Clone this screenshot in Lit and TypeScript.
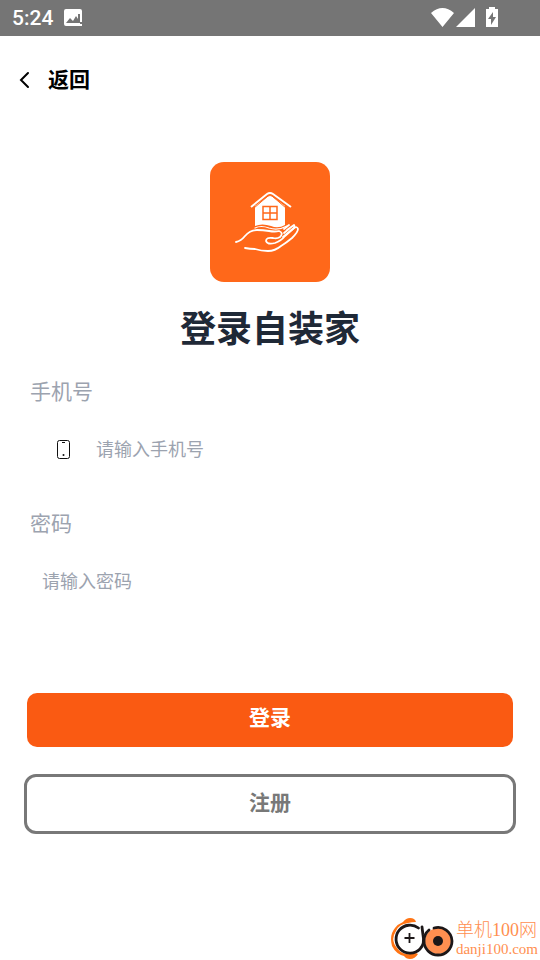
import { LitElement, html, css } from "lit";
import { customElement } from "lit/decorators.js";

@customElement("app-root")
export class AppRoot extends LitElement {
  static styles = css`
    :host {
      display: flex;
      flex-direction: column;
      min-height: 100vh;
      background: #fff;
      font-family: Roboto, "Noto Sans CJK SC", sans-serif;
    }
    * {
      box-sizing: border-box;
    }
    svg {
      display: block;
      flex: none;
    }
    button,
    input {
      font: inherit;
      margin: 0;
      padding: 0;
      border: 0;
      background: none;
    }
    .status {
      display: flex;
      align-items: center;
      height: 36px;
      padding: 0 40px 0 12px;
      background: #757575;
      color: #fff;
    }
    .time {
      font-size: 21px;
      font-weight: 500;
      line-height: 36px;
      margin-right: 11px;
    }
    .signals {
      display: flex;
      margin-left: auto;
    }
    .nav {
      display: flex;
      padding: 28px 16px;
    }
    .back {
      display: flex;
      align-items: center;
      gap: 16px;
      color: #000;
      font-size: 21px;
      font-weight: 700;
      line-height: 32px;
    }
    .hero {
      display: flex;
      flex-direction: column;
      align-items: center;
      gap: 22px;
      padding-top: 38px;
    }
    .app-icon {
      background: #ff681a;
      border-radius: 14px;
    }
    h1 {
      margin: 0;
      color: #1f2937;
      font-size: 36px;
      font-weight: 700;
      line-height: 52px;
    }
    form {
      display: flex;
      flex-direction: column;
    }
    .field {
      padding: 0 30px;
      height: 132px;
    }
    .field label {
      display: block;
      padding-top: 20px;
      color: #9ca3af;
      font-size: 21px;
      line-height: 32px;
    }
    .control {
      display: flex;
      align-items: center;
      height: 56px;
      margin-top: 14px;
      padding-left: 12px;
    }
    .control svg {
      margin: 0 24px 0 12px;
    }
    .control input {
      flex: 1;
      min-width: 0;
      color: #1f2937;
      font-size: 18px;
      line-height: 28px;
      outline: none;
    }
    .control input::placeholder {
      color: #9ca3af;
      opacity: 1;
    }
    .actions {
      display: flex;
      flex-direction: column;
      gap: 27px;
      padding: 73px 24px 0;
    }
    .actions button {
      font-size: 21px;
      font-weight: 700;
      line-height: 32px;
    }
    .login {
      height: 54px;
      margin: 0 3px;
      padding-bottom: 4px;
      border-radius: 10px;
      background: #fa5a12;
      color: #fff;
    }
    .actions .register {
      height: 60px;
      padding-bottom: 2px;
      border: 3px solid #787878;
      border-radius: 12px;
      color: #787878;
    }
    .brand {
      display: flex;
      justify-content: flex-end;
      gap: 1px;
      margin-top: auto;
      padding-right: 2px;
      color: #ff8f50;
      font-family: "Liberation Serif", "Noto Sans CJK SC", serif;
      font-weight: 300;
    }
    .brand-text {
      padding-top: 1px;
    }
    .brand-name {
      font-size: 18px;
      line-height: 22px;
    }
    .brand-url {
      font-size: 15px;
      line-height: 16px;
    }
  `;

  render() {
    return html`
      <header class="status">
        <span class="time">5:24</span>
        <svg width="20" height="18" viewBox="0 0 20 18">
          <path fill="#fff" d="M2 0h14q2 0 2 2v3h-4v9h2v3H2q-2 0-2-2V2Q0 0 2 0Z" />
          <path fill="#757575" d="m2 14 4-5 3 3 3-5 2 3v4Z" />
          <path fill="#fff" d="M16 5h2v8h-2zm0 10h2v2h-2z" />
        </svg>
        <div class="signals">
          <svg width="70" height="22" viewBox="430 7 70 22">
            <path fill="#fff" d="M442.500 27 431 13Q442.500 3 454 13ZM456 27l19-19v19ZM489 7h6v2h3v18h-12V9h3Z" />
            <path fill="#757575" d="m493 12-5 7h3v6l5-8h-3Z" />
          </svg>
        </div>
      </header>
      <nav class="nav">
        <button class="back" type="button">
          <svg width="16" height="20" viewBox="0 0 16 20">
            <path d="m12 3-7 7 7 7" fill="none" stroke="#000" stroke-width="2" stroke-linecap="round" />
          </svg>
          返回
        </button>
      </nav>
      <main>
        <section class="hero">
          <svg class="app-icon" width="120" height="120" viewBox="0 0 120 120">
            <path fill="#fff" d="M45 44 60 33l15 11v19q-7 4-14 1-9-3-16 0Z" />
            <path d="m41 45 16-13q3-2 6 0l18 13" fill="none" stroke="#fff" stroke-width="2" />
            <path d="m44 46 14-12q2-1 4 0l14 12" fill="none" stroke="#ff681a" />
            <path d="M53 44.500h14v13H53zM60 44.500v13M53 51h14" fill="none" stroke="#ff681a" stroke-width="1.500" />
            <g fill="none" stroke="#fff" stroke-width="1.800" stroke-linecap="round" stroke-linejoin="round">
              <path d="M26 80q5-1 9-6 5-6 12-6 6 0 12 1 6 1 10 0 5 2 1 6-3 2-7 1-7-1-7 3 1 4 9 2 6-2 10-7l9-8q3-2 4 1 0 3-6 9-6 5-11 8-6 5-13 5-7 0-13-2-5 0-10-1" />
              <path d="m73 75 11-9q1-2 0-3l-7 5M74 71l6-5M74 67l5-4" />
              <path d="M45 66q6-3 14 0 9 3 18-2" stroke-width="1.200" />
            </g>
          </svg>
          <h1>登录自装家</h1>
        </section>
        <form>
          <div class="field">
            <label for="phone">手机号</label>
            <div class="control">
              <svg width="18" height="22" viewBox="0 0 18 22">
                <rect x="3.500" y="1.500" width="12" height="18" rx="2" fill="none" stroke="#111" />
                <path d="M8 3.500h3" stroke="#111" />
                <circle cx="9.500" cy="16" r="1" fill="#111" />
              </svg>
              <input id="phone" type="tel" placeholder="请输入手机号" />
            </div>
          </div>
          <div class="field">
            <label for="password">密码</label>
            <div class="control">
              <input id="password" type="password" placeholder="请输入密码" />
            </div>
          </div>
          <div class="actions">
            <button class="login" type="button">登录</button>
            <button class="register" type="button">注册</button>
          </div>
        </form>
      </main>
      <footer class="brand">
        <svg width="64" height="42" viewBox="0 0 64 42">
          <path d="M12 4Q15 0 19 0q5 0 6 4-4 0-8 1Q8 6 5 13-1 22 6 30q5 7 13 6 5-2 8 0-3 5-8 5-4 0-6-3Q5 36 1 28-2 17 4 10 7 6 12 4Z" fill="#ff7414" />
          <path d="M27.500 10A14 14 0 1 0 29 31Q34 26 32 17L31 9" fill="#fff" stroke="#1c1718" stroke-width="2.800" stroke-linecap="round" />
          <path d="M18.500 15v10M13.500 20h10" stroke="#1c1718" stroke-width="1.800" />
          <circle cx="47" cy="23" r="13" fill="#ff8f50" />
          <path d="M38 12A14 14 0 0 0 33 23 14 14 0 1 0 61 23 14 14 0 0 0 43 10" fill="none" stroke="#1c1718" stroke-width="2.800" stroke-linecap="round" />
          <circle cx="47" cy="23" r="5" fill="#1c1718" />
        </svg>
        <div class="brand-text">
          <div class="brand-name">单机100网</div>
          <div class="brand-url">danji100.com</div>
        </div>
      </footer>
    `;
  }
}
